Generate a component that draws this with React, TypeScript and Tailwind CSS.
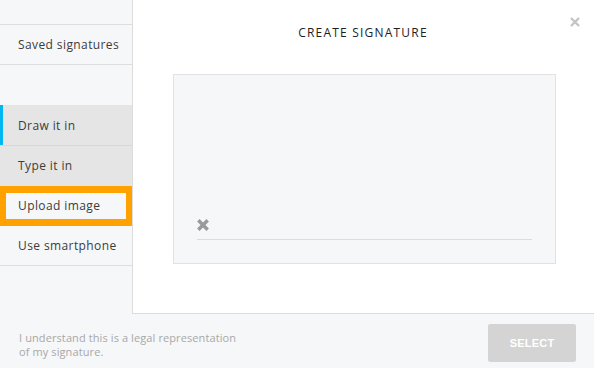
import React from "react";

const XIcon = ({ size, color, stroke }: { size: number; color: string; stroke: number }) => (
  <svg width={size} height={size} viewBox="0 0 12 12">
    <path d="M2 2 L10 10 M10 2 L2 10" stroke={color} strokeWidth={stroke} strokeLinecap="butt" />
  </svg>
);

export default function App() {
  const font = { fontFamily: "'Open Sans', 'Liberation Sans', sans-serif" };
  return (
    <div className="w-[594px] h-[368px] bg-[#f6f7f8] flex flex-col overflow-hidden" style={font}>
      <div className="flex h-[314px]">
        {/* Sidebar */}
        <div className="w-[132px] flex flex-col text-[12px] text-[#3c3c3c] tracking-[0.4px]">
          <div className="h-[24px]" />
          <div className="h-[41px] border-t border-b border-[#dedede] flex items-center pl-[18px]">Saved signatures</div>
          <div className="h-[40px]" />
          <div className="h-[41px] bg-[#e5e5e5] border-b border-[#d8d8d8] flex items-center pl-[18px] pt-[1px] relative">
            <div className="absolute left-0 top-0 bottom-0 w-[3px] bg-[#00b7f1]" />
            Draw it in
          </div>
          <div className="h-[40px] bg-[#e5e5e5] flex items-center pl-[18px]">Type it in</div>
          <div className="h-[40px] bg-[#ffa200] px-[6px] py-[7px] flex">
            <div className="flex-1 bg-[#f6f7f8] flex items-center pl-[12px]">Upload image</div>
          </div>
          <div className="h-[40px] border-b border-[#dedede] flex items-center pl-[18px]">Use smartphone</div>
        </div>
        {/* Main panel */}
        <div className="flex-1 bg-white border-l border-b border-[#dcdcdc] relative flex flex-col items-center">
          <div className="absolute right-[13px] top-[16px]">
            <XIcon size={12} color="#c4c4c4" stroke={2.4} />
          </div>
          <div className="mt-[24px] h-[17px] flex items-center text-[12px] tracking-[1.2px] text-[#1e1e1e] mr-[1px]">
            CREATE SIGNATURE
          </div>
          <div className="mt-[33px] ml-[2px] w-[383px] h-[190px] bg-[#f6f7f8] border border-[#e2e2e2] flex flex-col justify-end px-[23px] pb-[23px]">
            <div className="mb-[7px] ml-[-1px]">
              <XIcon size={14} color="#9a9a9a" stroke={3} />
            </div>
            <div className="h-px bg-[#dcdcdc]" />
          </div>
        </div>
      </div>
      {/* Footer */}
      <div className="flex-1 flex items-start justify-between pl-[19px] pr-[18px]">
        <div className="mt-[17px] text-[11px] leading-[14px] text-[#a8a8a8] tracking-[0.1px]">
          <div>I understand this is a legal representation</div>
          <div>of my signature.</div>
        </div>
        <div className="mt-[10px] w-[88px] h-[38px] bg-[#d4d4d4] rounded-[2px] flex items-center justify-center text-white text-[11px] font-bold tracking-[0.2px]" style={{ fontFamily: "'Liberation Sans', Arial, sans-serif" }}>
          SELECT
        </div>
      </div>
    </div>
  );
}
